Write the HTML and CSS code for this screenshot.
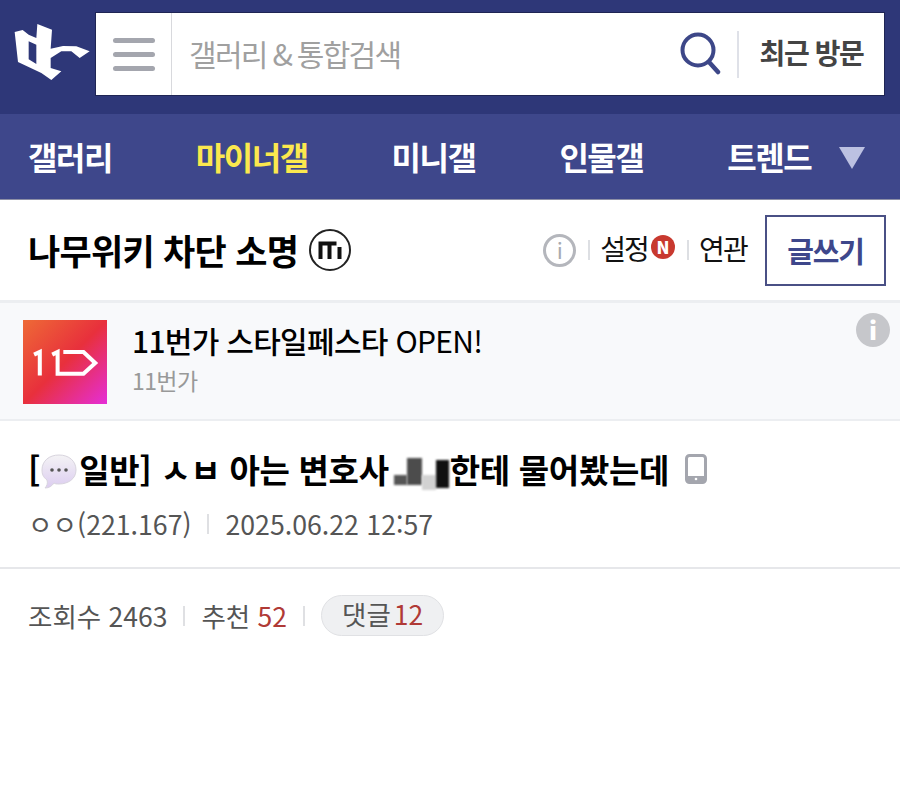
FILE: index.html
```html
<!DOCTYPE html>
<html lang="ko">
<head>
    <meta charset="UTF-8">
    <meta name="viewport" content="width=device-width, initial-scale=1.0">
    <title>나무위키 차단 소명</title>
    <link rel="stylesheet" href="styles.css">
</head>
<body>
    <div class="top">
        <svg class="logo" viewBox="0 0 258 204" width="86" height="68">
            <path fill="#fff" fill-rule="evenodd" d="M20 42 L44 36 L62 50 L85 60 L88 18 L132 35 L128 92 L165 84 L205 85 L245 100 L215 120 L190 100 L160 100 L128 120 L128 150 L160 160 L130 186 L100 165 L30 132 Z M62 70 L62 124 L85 138 L85 80 Z"/>
        </svg>
        <div class="search">
            <div class="menu-btn"><span></span><span></span><span></span></div>
            <div class="placeholder">갤러리 &amp; 통합검색</div>
            <svg class="search-icon" viewBox="0 0 42 46" width="42" height="46">
                <circle cx="19" cy="19" r="15.5" fill="none" stroke="#3d4788" stroke-width="4"/>
                <path d="M30 31 L39 41" stroke="#3d4788" stroke-width="4.5" stroke-linecap="round"/>
            </svg>
            <div class="search-sep"></div>
            <div class="recent">최근 방문</div>
        </div>
    </div>

    <div class="nav">
        <a class="nav-item">갤러리</a>
        <a class="nav-item active">마이너갤</a>
        <a class="nav-item">미니갤</a>
        <a class="nav-item">인물갤</a>
        <a class="nav-item">트렌드</a>
        <span class="nav-arrow"></span>
    </div>

    <div class="gall-head">
        <h1>나무위키 차단 소명</h1>
        <svg class="m-badge" viewBox="0 0 42 42" width="42" height="42">
            <circle cx="21" cy="21" r="20" fill="none" stroke="#222" stroke-width="2"/>
            <path d="M11.5 30 V14.5 H27.5 M20.5 14.5 V30 M30.5 18 V30" fill="none" stroke="#111" stroke-width="4"/>
        </svg>
        <div class="gall-tools">
            <span class="info-ring">i</span>
            <span class="tool-sep"></span>
            <span class="tool">설정</span><span class="new-badge">N</span>
            <span class="tool-sep"></span>
            <span class="tool">연관</span>
            <a class="write-btn">글쓰기</a>
        </div>
    </div>

    <div class="ad">
        <svg class="ad-logo" viewBox="0 0 250 250" width="84" height="84">
            <path d="M33 103 L50 95 V165 M87 103 L103 95 V160 H180 L215 128 L180 95 H120" fill="none" stroke="#fff" stroke-width="12"/>
        </svg>
        <div class="ad-text">
            <div class="ad-title"><b>11번가 스타일페스타</b> OPEN!</div>
            <div class="ad-sub">11번가</div>
        </div>
        <span class="ad-info">i</span>
    </div>

    <div class="post-head">
        <div class="post-title">[<svg class="bubble" viewBox="0 0 38 38" width="38" height="38">
                <defs>
                    <linearGradient id="bubbleFill" x1="0" y1="0" x2="0" y2="1">
                        <stop offset="0" stop-color="#f4f3f5"/>
                        <stop offset="1" stop-color="#dccdf0"/>
                    </linearGradient>
                </defs>
                <path d="M19 2 C29 2 36 8 36 17 C36 26 28 31 19 31 C17 31 15 31 14 30 C12 33 9 35 5 35 C7 33 8 30 7 27 C3 24 2 21 2 17 C2 8 9 2 19 2 Z" fill="url(#bubbleFill)" stroke="#d8d4de" stroke-width="1"/>
                <circle cx="12" cy="17" r="1.8" fill="#555"/>
                <circle cx="19" cy="17" r="1.8" fill="#555"/>
                <circle cx="26" cy="17" r="1.8" fill="#555"/>
            </svg>일반] ㅅㅂ 아는 변호사<span class="censor"><i class="c1"></i><i class="c2"></i><i class="c3"></i><i class="c4"></i></span>한테 물어봤는데<svg class="phone" viewBox="0 0 22 30" width="22" height="30">
                <rect x="1.5" y="1.5" width="19" height="27" rx="3" fill="none" stroke="#a4a6ae" stroke-width="3"/>
                <rect x="2" y="22" width="18" height="6" fill="#a4a6ae"/>
                <circle cx="11" cy="25" r="1.3" fill="#fff"/>
            </svg>
        </div>
        <div class="post-meta">
            <span>ㅇㅇ(221.167)</span>
            <span class="meta-sep"></span>
            <span>2025.06.22 12:57</span>
        </div>
    </div>

    <div class="post-stats">
        <span>조회수 2463</span>
        <span class="meta-sep"></span>
        <span>추천 <em>52</em></span>
        <span class="meta-sep"></span>
        <span class="reply-pill">댓글<em>12</em></span>
    </div>
</body>
</html>
```

FILE: styles.css
```css
* {
    margin: 0;
    padding: 0;
    box-sizing: border-box;
}

body {
    font-family: "Noto Sans CJK KR", "Noto Sans", sans-serif;
    background: #fff;
    color: #000;
    height: 793px;
    overflow: hidden;
}

.top {
    height: 114px;
    background: #2e3778;
    display: flex;
    align-items: flex-start;
    padding: 12px 15px 0 8px;
}

.logo {
    flex: none;
    margin: 6px 1px 0 0;
}

.search {
    flex: 1;
    height: 84px;
    background: #fff;
    border: 1px solid #1f2554;
    display: flex;
    align-items: center;
}

.menu-btn {
    width: 76px;
    height: 100%;
    border-right: 1px solid #d8d9dd;
    display: flex;
    flex-direction: column;
    justify-content: center;
    align-items: center;
    gap: 9px;
}

.menu-btn span {
    width: 42px;
    height: 5px;
    border-radius: 3px;
    background: #a4a6ae;
}

.placeholder {
    flex: 1;
    padding: 0 0 2px 17px;
    font-size: 30px;
    letter-spacing: -1.7px;
    word-spacing: -1px;
    color: #a0a0a0;
}

.search-icon {
    flex: none;
    margin-right: 16px;
}

.search-sep {
    width: 2px;
    height: 47px;
    background: #dfe1e8;
}

.recent {
    width: 145px;
    text-align: center;
    font-size: 28px;
    font-weight: 700;
    letter-spacing: -1.4px;
    color: #444;
    padding-bottom: 4px;
}

.nav {
    height: 86px;
    background: #3e478b;
    border-bottom: 1px solid #8d8fa6;
    display: flex;
    align-items: center;
    padding-left: 28px;
    padding-bottom: 2px;
    color: #fff;
}

.nav-item {
    font-size: 32px;
    font-weight: 700;
    letter-spacing: -1.5px;
    margin-right: 84px;
}

.nav-item.active {
    color: #fbe84e;
}

.nav-item:nth-child(5) {
    margin-right: 28px;
}

.nav-arrow {
    width: 0;
    height: 0;
    margin-top: 4px;
    border-left: 13px solid transparent;
    border-right: 13px solid transparent;
    border-top: 22px solid #bcc1e2;
}

.gall-head {
    height: 103px;
    display: flex;
    align-items: center;
    padding: 0 14px 0 28px;
    border-bottom: 3px solid #eceef1;
}

.gall-head h1 {
    font-size: 35px;
    font-weight: 700;
    letter-spacing: -0.7px;
    padding-bottom: 2px;
}

.m-badge {
    flex: none;
    margin-left: 11px;
}

.gall-tools {
    margin-left: auto;
    display: flex;
    align-items: center;
}

.info-ring {
    width: 33px;
    height: 33px;
    border: 3px solid #b4b6bc;
    border-radius: 50%;
    color: #a8aab0;
    font-size: 22px;
    line-height: 25px;
    text-align: center;
}

.tool-sep {
    width: 2px;
    height: 20px;
    background: #dddfe3;
    margin: 0 10px 0 12px;
}

.tool {
    font-size: 28px;
    letter-spacing: -1.8px;
    color: #111;
    padding-bottom: 4px;
}

.new-badge {
    width: 24px;
    height: 24px;
    margin: -6px 0 0 3px;
    border-radius: 50%;
    background: #c8392f;
    color: #fff;
    font-size: 17px;
    font-weight: 900;
    line-height: 24px;
    text-align: center;
}

.write-btn {
    width: 121px;
    height: 71px;
    margin-left: 18px;
    border: 2px solid #4a5085;
    text-align: center;
    font-size: 29px;
    font-weight: 700;
    letter-spacing: -1.1px;
    line-height: 66px;
    color: #3e478b;
}

.ad {
    position: relative;
    height: 118px;
    background: #f8f9fb;
    border-bottom: 2px solid #eceef1;
    display: flex;
    align-items: flex-start;
    padding: 17px 0 0 23px;
}

.ad-logo {
    flex: none;
    background: linear-gradient(135deg, #ee6a36 0%, #e8303c 50%, #e52ed8 100%);
}

.ad-text {
    margin-left: 25px;
}

.ad-title {
    font-size: 30px;
    letter-spacing: -0.7px;
    line-height: 40px;
}

.ad-title b {
    font-weight: 500;
}

.ad-sub {
    margin-top: 1px;
    font-size: 23px;
    letter-spacing: -0.6px;
    color: #999;
    line-height: 38px;
}

.ad-info {
    position: absolute;
    top: 10px;
    right: 10px;
    width: 34px;
    height: 34px;
    border-radius: 50%;
    background: #c6c7cb;
    color: #fff;
    font-size: 25px;
    font-weight: 900;
    line-height: 33px;
    text-align: center;
}

.post-head {
    height: 148px;
    padding: 23px 0 0 28px;
    border-bottom: 2px solid #e6e7ea;
}

.post-title {
    height: 50px;
    font-size: 33px;
    line-height: 50px;
    font-weight: 700;
    letter-spacing: -0.3px;
    white-space: nowrap;
}

.post-title svg {
    vertical-align: middle;
}

.bubble {
    margin: 0 1px 5px 0;
}

.censor {
    display: inline-flex;
    align-items: flex-start;
    height: 32px;
    margin: 0 1px 0 5px;
    vertical-align: middle;
}

.censor i {
    display: block;
    filter: blur(1px);
}

.c1 { width: 13px; height: 10px; background: #555; margin-top: 17px; }
.c2 { width: 15px; height: 27px; background: #4c4c4c; }
.c3 { width: 14px; height: 15px; background: #d2d2d2; margin-top: 17px; }
.c4 { width: 13px; height: 28px; background: #111; margin-top: 2px; }

.phone {
    margin: 0 0 10px 16px;
}

.post-meta {
    display: flex;
    align-items: center;
    gap: 16px;
    margin-top: 10px;
    font-size: 26.7px;
    color: #555;
}

.meta-sep {
    width: 2px;
    height: 20px;
    background: #dfe0e3;
}

.post-stats {
    display: flex;
    align-items: center;
    gap: 16px;
    padding: 26px 0 0 28px;
    font-size: 26.5px;
    color: #555;
}

.post-stats em {
    font-style: normal;
    color: #b03a36;
}

.reply-pill {
    height: 41px;
    padding: 0 20px;
    border: 1px solid #e0e1e4;
    border-radius: 21px;
    background: #eff0f2;
    line-height: 36px;
}

.reply-pill em {
    margin-left: 3px;
}
```
